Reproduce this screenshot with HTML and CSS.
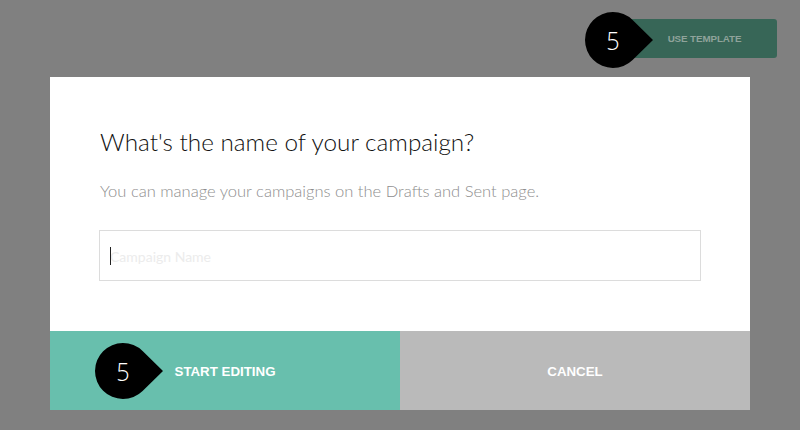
FILE: index.html
```html
<!DOCTYPE html>
<html>
<head>
<meta charset="utf-8">
<link rel="stylesheet" href="styles.css">
</head>
<body>
<div class="page">
  <div class="topbar">
    <div class="tpl-wrap">
      <button class="tpl-btn">USE TEMPLATE</button>
      <div class="badge badge-top">
        <svg width="70" height="58" viewBox="-29 -29 70 58"><path d="M19.6 -20 L40 0 L19.6 20 A28 28 0 1 1 19.6 -20 Z" fill="#000"/></svg>
        <span class="badge-num">5</span>
      </div>
    </div>
  </div>
  <div class="modal">
    <div class="modal-body">
      <h1 class="title">What's the name of your campaign?</h1>
      <p class="sub">You can manage your campaigns on the Drafts and Sent page.</p>
      <div class="input"><span class="caret"></span><span class="placeholder">Campaign Name</span></div>
    </div>
    <div class="actions">
      <div class="act act-start">
        <span>START EDITING</span>
        <div class="badge badge-bottom">
          <svg width="70" height="58" viewBox="-29 -29 70 58"><path d="M19.6 -20 L40 0 L19.6 20 A28 28 0 1 1 19.6 -20 Z" fill="#000"/></svg>
          <span class="badge-num">5</span>
        </div>
      </div>
      <div class="act act-cancel"><span>CANCEL</span></div>
    </div>
  </div>
</div>
</body>
</html>
```

FILE: styles.css
```css
html, body {
  margin: 0;
  padding: 0;
  background: #808080;
  width: 800px;
  height: 430px;
  overflow: hidden;
  font-family: Lato, "Open Sans", sans-serif;
}
.page {
  display: flex;
  flex-direction: column;
  align-items: center;
}
.topbar {
  width: 800px;
  height: 77px;
  display: flex;
  justify-content: flex-end;
  align-items: flex-start;
}
.tpl-wrap {
  position: relative;
  margin-top: 19px;
  margin-right: 23px;
}
.tpl-btn {
  display: block;
  width: 149px;
  height: 39px;
  border: none;
  border-radius: 3px;
  background: #376657;
  color: #8fa39b;
  font-family: "Liberation Sans", Arial, sans-serif;
  font-weight: bold;
  font-size: 9.8px;
  padding: 0 0 0 4px;
  letter-spacing: -0.1px;
}
.badge {
  position: absolute;
  width: 70px;
  height: 58px;
}
.badge svg {
  display: block;
}
.badge-num {
  position: absolute;
  left: 0;
  top: 0;
  width: 58px;
  height: 58px;
  line-height: 58px;
  text-align: center;
  color: #fff;
  font-family: "Open Sans", sans-serif;
  font-weight: 300;
  font-size: 26px;
  transform: scaleX(0.9);
}
.badge-top {
  left: -44px;
  top: -8px;
}
.modal {
  width: 700px;
  background: #fff;
  display: flex;
  flex-direction: column;
}
.modal-body {
  height: 254px;
  box-sizing: border-box;
  padding: 50px 49px 0 49px;
}
.title {
  margin: 0 0 0 1px;
  font-weight: 300;
  font-size: 24.3px;
  line-height: 30px;
  color: #111;
  letter-spacing: 0;
}
.sub {
  margin: 23px 0 0 1px;
  font-weight: 300;
  font-size: 16.55px;
  line-height: 22px;
  color: #8e8e8e;
  letter-spacing: 0;
}
.input {
  margin-top: 28px;
  height: 51px;
  box-sizing: border-box;
  border: 1px solid #dcdcdc;
  display: flex;
  align-items: center;
  padding-left: 10px;
  position: relative;
}
.caret {
  position: absolute;
  left: 10px;
  top: 16px;
  width: 1px;
  height: 18px;
  background: #222;
}
.placeholder {
  font-size: 14px;
  color: #ececec;
  padding-top: 2px;
}
.actions {
  display: flex;
  height: 79px;
}
.act {
  flex: 1;
  display: flex;
  align-items: center;
  justify-content: center;
  color: #fff;
  font-family: "Liberation Sans", Arial, sans-serif;
  font-weight: bold;
  font-size: 13.3px;
  position: relative;
  padding-top: 2px;
  box-sizing: border-box;
}
.act-start {
  background: #68bfad;
}
.act-cancel {
  background: #bababa;
}
.badge-bottom {
  left: 44px;
  top: 11px;
}
```
